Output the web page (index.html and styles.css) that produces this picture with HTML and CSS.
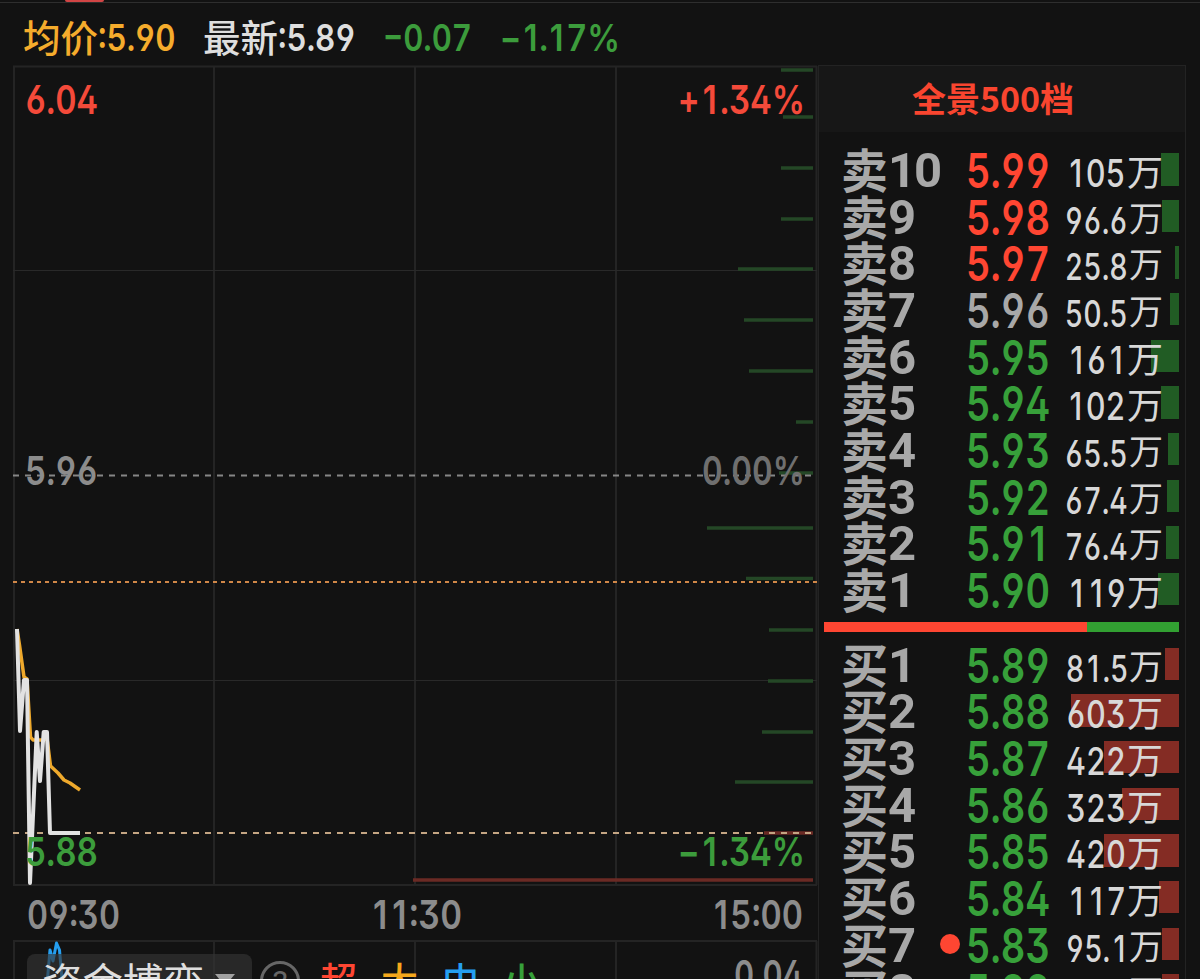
FILE: index.html
```
<!DOCTYPE html>
<html lang="zh-CN">

<head>
    <meta charset="UTF-8">
    <meta name="viewport" content="width=device-width, initial-scale=1.0">
    <title>分时行情</title>
    <link rel="stylesheet" href="styles.css">
</head>

<body>
    <div class="tab-line"><div class="tab-active"></div></div>

    <header class="quote">
        <div class="quote-item avg"><span>均价</span><b class="num">:5.90</b></div>
        <div class="quote-item last"><span>最新</span><b class="num">:5.89</b></div>
        <svg class="quote-change" width="240" height="46" viewBox="0 0 240 46">
            <text x="0" y="36" textLength="89" lengthAdjust="spacingAndGlyphs">−0.07</text>
            <text x="117" y="36" textLength="120" lengthAdjust="spacingAndGlyphs">−<tspan class="one" dx="3">1</tspan><tspan dx="2">.</tspan><tspan class="one" dx="2">1</tspan><tspan dx="3">7%</tspan></text>
        </svg>
    </header>

    <main class="main">
        <section class="left">
            <svg class="chart" width="818" height="876" viewBox="0 64 818 876">
                <!-- cuadrícula -->
                <g class="grid">
                    <path d="M13 66.5H817M13 885H817M14 66V885M214 66V885M415 66V885M616 66V885M816.5 66V885" />
                    <path class="thin" d="M13 270.5H817M13 680.5H817" />
                </g>

                <!-- profundidad por precio -->
                <path class="depth-sell" d="M781 70H813M783 117H813M781 168H813M781 219H813M738 269H813M744 320H813M749 371H813M796 422H813M779 473H813M707 528H813M746 578.5H813M769 630H813M768 681H813M762 732H813M735 782H813" />
                <path class="depth-buy" d="M764 833H813M413 880H813" />

                <path class="dash dash-zero" d="M13 475.5H813" />
                <path class="dash dash-avg" d="M13 582H817" />
                <path class="dash dash-low" d="M13 833H813" />

                <polyline class="line-avg" points="17,629 19.5,645 24,677 27,679 30.5,737 33,740 43,740 47,738 50.5,766 58,773 64,780 70,783 80,790" />
                <polyline class="line-price" points="17,629 20,731 24,680 27,680 30,883 36.7,732 40,781 43.7,732 47,732 50,833 80,833" />

                <text class="red" x="25" y="114" textLength="73" lengthAdjust="spacingAndGlyphs">6.04</text>
                <text class="gray" x="25" y="485" textLength="73" lengthAdjust="spacingAndGlyphs">5.96</text>
                <text class="green" x="25" y="866" textLength="73" lengthAdjust="spacingAndGlyphs">5.88</text>
                <text class="red" x="678" y="114" textLength="127" lengthAdjust="spacingAndGlyphs">+<tspan class="one" dx="4">1</tspan><tspan dx="4">.34%</tspan></text>
                <text class="dim" x="702" y="485" textLength="103" lengthAdjust="spacingAndGlyphs">0.00%</text>
                <text class="green" x="678" y="866" textLength="127" lengthAdjust="spacingAndGlyphs">−<tspan class="one" dx="4">1</tspan><tspan dx="4">.34%</tspan></text>

                <text class="gray" x="27" y="929" textLength="93" lengthAdjust="spacingAndGlyphs">09:30</text>
                <text class="gray" x="373" y="929" textLength="89" lengthAdjust="spacingAndGlyphs"><tspan class="one">1</tspan><tspan class="one" dx="6">1</tspan><tspan dx="3">:30</tspan></text>
                <text class="gray" x="714" y="929" textLength="89" lengthAdjust="spacingAndGlyphs"><tspan class="one">1</tspan><tspan dx="3">5:00</tspan></text>
            </svg>

            <div class="fund">
                <svg class="fund-grid" width="818" height="39" viewBox="0 940 818 39">
                    <path class="fund-lines" d="M13 941H817M14 941V979M214 941V979M415 941V979M616 941V979M816.5 941V979" />
                    <polyline class="fund-curve" points="47.5,979 50,950 53,961 56.5,943 59.5,950 62,979" />
                    <text class="gray" x="734" y="989" textLength="69" lengthAdjust="spacingAndGlyphs">0.04</text>
                </svg>
                <div class="fund-bar">
                    <div class="fund-select">资金博弈<i class="caret"></i></div>
                    <div class="help">?</div>
                    <span class="chip red">超</span>
                    <span class="chip orange">大</span>
                    <span class="chip blue">中</span>
                    <span class="chip green">小</span>
                </div>
            </div>
        </section>

        <aside class="book">
            <div class="book-title">全景500档</div>
            <div class="rows sell">
                <div class="row"><div class="bar" style="width: 18px"></div><div class="label">卖<b>10</b></div><div class="price red">5.99</div><div class="vol big"><b><u>1</u>05</b>万</div></div>
                <div class="row"><div class="bar" style="width: 17px"></div><div class="label">卖<b>9</b></div><div class="price red">5.98</div><div class="vol"><b>96.6</b>万</div></div>
                <div class="row"><div class="bar" style="width: 4px"></div><div class="label">卖<b>8</b></div><div class="price red">5.97</div><div class="vol"><b>25.8</b>万</div></div>
                <div class="row"><div class="bar" style="width: 9px"></div><div class="label">卖<b>7</b></div><div class="price flat">5.96</div><div class="vol"><b>50.5</b>万</div></div>
                <div class="row"><div class="bar" style="width: 28px"></div><div class="label">卖<b>6</b></div><div class="price green">5.95</div><div class="vol big"><b><u>1</u>6<u>1</u></b>万</div></div>
                <div class="row"><div class="bar" style="width: 18px"></div><div class="label">卖<b>5</b></div><div class="price green">5.94</div><div class="vol big"><b><u>1</u>02</b>万</div></div>
                <div class="row"><div class="bar" style="width: 11px"></div><div class="label">卖<b>4</b></div><div class="price green">5.93</div><div class="vol"><b>65.5</b>万</div></div>
                <div class="row"><div class="bar" style="width: 12px"></div><div class="label">卖<b>3</b></div><div class="price green">5.92</div><div class="vol"><b>67.4</b>万</div></div>
                <div class="row"><div class="bar" style="width: 13px"></div><div class="label">卖<b>2</b></div><div class="price green">5.9<u>1</u></div><div class="vol"><b>76.4</b>万</div></div>
                <div class="row"><div class="bar" style="width: 21px"></div><div class="label">卖<b>1</b></div><div class="price green">5.90</div><div class="vol big"><b><u>1</u><u>1</u>9</b>万</div></div>
            </div>
            <div class="ratio"><div class="ratio-buy" style="width: 74.1%"></div></div>
            <div class="rows buy">
                <div class="row"><div class="bar" style="width: 14px"></div><div class="label">买<b>1</b></div><div class="price green">5.89</div><div class="vol"><b>8<u>1</u>.5</b>万</div></div>
                <div class="row"><div class="bar" style="width: 108px"></div><div class="label">买<b>2</b></div><div class="price green">5.88</div><div class="vol big"><b>603</b>万</div></div>
                <div class="row"><div class="bar" style="width: 75px"></div><div class="label">买<b>3</b></div><div class="price green">5.87</div><div class="vol big"><b>422</b>万</div></div>
                <div class="row"><div class="bar" style="width: 57px"></div><div class="label">买<b>4</b></div><div class="price green">5.86</div><div class="vol big"><b>323</b>万</div></div>
                <div class="row"><div class="bar" style="width: 75px"></div><div class="label">买<b>5</b></div><div class="price green">5.85</div><div class="vol big"><b>420</b>万</div></div>
                <div class="row"><div class="bar" style="width: 20px"></div><div class="label">买<b>6</b></div><div class="price green">5.84</div><div class="vol big"><b><u>1</u><u>1</u>7</b>万</div></div>
                <div class="row"><div class="bar" style="width: 17px"></div><div class="label">买<b>7</b></div><i class="dot"></i><div class="price green">5.83</div><div class="vol"><b>95.<u>1</u></b>万</div></div>
                <div class="row"><div class="bar" style="width: 17px"></div><div class="label">买<b>8</b></div><div class="price green">5.82</div><div class="vol"><b>95.6</b>万</div></div>
            </div>
        </aside>
    </main>
</body>

</html>
```
FILE: styles.css
```
* {
    box-sizing: border-box;
}

body {
    margin: 0;
    width: 1200px;
    height: 979px;
    overflow: hidden;
    background-color: #121212;
    color: #dedede;
    font-family: "Noto Sans CJK SC", sans-serif;
}

b,
i {
    font-weight: inherit;
    font-style: normal;
}

.red { color: #ff4632; fill: #f44a3a; }
.green { color: #37a03a; fill: #3c9c3c; }
.orange { color: #f5a81c; }
.blue { color: #259ff0; }
.gray { fill: #8c8c8c; }
.dim { fill: #6f6f6f; }
.flat { color: #a8a8a8; }

.tab-line {
    height: 3px;
    border-bottom: 1px solid #2e2e2e;
}

.tab-active {
    width: 39px;
    height: 2px;
    margin-left: 65px;
    background-color: #d24545;
    border-radius: 0 0 4px 4px;
}

/* cabecera */
.quote {
    display: flex;
    height: 61px;
    padding: 12px 0 0 23px;
    font-size: 37.5px;
    font-weight: 500;
    line-height: 41px;
}

.quote-item {
    display: flex;
    width: 180px;
}

.num,
.price,
.vol b,
svg text {
    font-family: Inter, Roboto, sans-serif;
    font-weight: 600;
    font-feature-settings: "tnum", "cv03", "cv04", "ss01";
}

.num {
    font-size: 37.5px;
    line-height: 46px;
    transform: scaleX(0.835);
    transform-origin: left;
}

.avg { color: #f5ac2c; }
.last { color: #dedede; }

.quote-change {
    fill: #3c9c3c;
    font-size: 37.5px;
}

.main {
    display: flex;
}

.left {
    width: 818px;
}

/* gráfico */
.chart {
    display: block;
    font-size: 40px;
}

.grid,
.fund-lines {
    fill: none;
    stroke: #242424;
    stroke-width: 2;
}

.thin {
    stroke: #292929;
    stroke-width: 1;
}

.depth-sell,
.depth-buy {
    stroke: #244726;
    stroke-width: 3.5;
}

.depth-buy {
    stroke: #6b2a24;
}

.dash {
    stroke-width: 2;
    stroke-dasharray: 6 6;
}

.dash-zero { stroke: #868686; }
.dash-low { stroke: #c4a583; }

.dash-avg {
    stroke: #d08748;
    stroke-dasharray: 4 4;
}

.line-avg,
.line-price {
    fill: none;
    stroke: #eea92c;
    stroke-width: 3.5;
    stroke-linejoin: round;
}

.line-price {
    stroke: #e2e2e2;
    stroke-width: 4;
}

/* panel inferior */
.fund {
    display: grid;
    height: 39px;
    overflow: hidden;
}

.fund-grid,
.fund-bar {
    grid-area: 1 / 1;
}

.fund-grid {
    font-size: 40px;
}

.fund-curve {
    fill: none;
    stroke: #259ff0;
    stroke-width: 3;
    stroke-linejoin: round;
}

.fund-bar {
    display: flex;
    padding: 14px 0 0 27px;
}

.fund-select {
    display: flex;
    flex: none;
    width: 225px;
    height: 54px;
    padding-left: 15px;
    background-color: rgba(52, 52, 52, 0.65);
    border-radius: 8px;
    font-size: 40.5px;
    line-height: 54px;
}

.caret {
    margin: 20px 0 0 11px;
    width: 20px;
    height: 12px;
    background-color: #a0a0a0;
    clip-path: polygon(0 0, 100% 0, 50% 100%);
}

.help {
    flex: none;
    width: 40px;
    height: 40px;
    margin: 7px 20px 0 8px;
    border: 3px solid #666;
    border-radius: 50%;
    color: #666;
    font-family: Roboto, sans-serif;
    font-size: 32px;
    line-height: 36px;
    text-align: center;
}

.chip {
    width: 61px;
    padding-top: 5px;
    font-size: 37px;
    font-weight: 500;
    line-height: 40px;
}

/* libro de órdenes */
.book {
    width: 368px;
    height: 915px;
    margin-top: 1px;
    border: 1px solid #232323;
    overflow: hidden;
}

.book-title {
    height: 66px;
    padding-right: 18px;
    background-color: #171717;
    color: #f9452f;
    font-size: 34px;
    font-weight: 700;
    line-height: 63px;
    text-align: center;
}

.rows {
    padding-top: 14px;
}

.rows.buy {
    padding-top: 9px;
}

.row {
    position: relative;
    display: grid;
    grid-template-columns: 125px 100px 97px;
    height: 46.667px;
    padding-left: 22px;
    line-height: 46.667px;
    white-space: nowrap;
}

.bar {
    position: absolute;
    top: 7px;
    right: 6px;
    height: 32.5px;
    background-color: #215c24;
}

.buy .bar {
    background-color: #842c24;
}

.label {
    display: flex;
    color: #a8a8a8;
    font-size: 47px;
    font-weight: 700;
    line-height: 43px;
}

.label b {
    font-family: Roboto, sans-serif;
    font-size: 49px;
    line-height: 49px;
    letter-spacing: -2px;
}

.price {
    font-size: 47.5px;
    font-weight: 600;
    line-height: 49px;
    transform: scaleX(0.8);
    transform-origin: left;
}

/* el 1 ocupa el mismo ancho que las demás cifras */
u {
    display: inline-block;
    width: 0.64em;
    text-align: center;
    text-decoration: none;
}

u,
.one {
    font-feature-settings: normal;
}

.vol {
    position: relative;
    display: flex;
    justify-content: flex-end;
    color: #d8d8d8;
    font-size: 34px;
    line-height: 48px;
}

.vol b {
    flex: none;
    margin-right: 1px;
    font-size: 36.5px;
    font-weight: 550;
    line-height: 56px;
    transform: scaleX(0.78);
    transform-origin: right;
}

.vol.big {
    font-size: 36px;
}

.vol.big b {
    font-size: 38px;
    line-height: 54px;
    transform: scaleX(0.81);
}

.dot {
    position: absolute;
    left: 121px;
    top: 13px;
    width: 20px;
    height: 20px;
    background-color: #ff4632;
    border-radius: 50%;
}

.ratio {
    height: 10px;
    margin: 9px 6px 0 5px;
    background-color: #32a032;
}

.ratio-buy {
    height: 10px;
    background-color: #ff4632;
}
```
